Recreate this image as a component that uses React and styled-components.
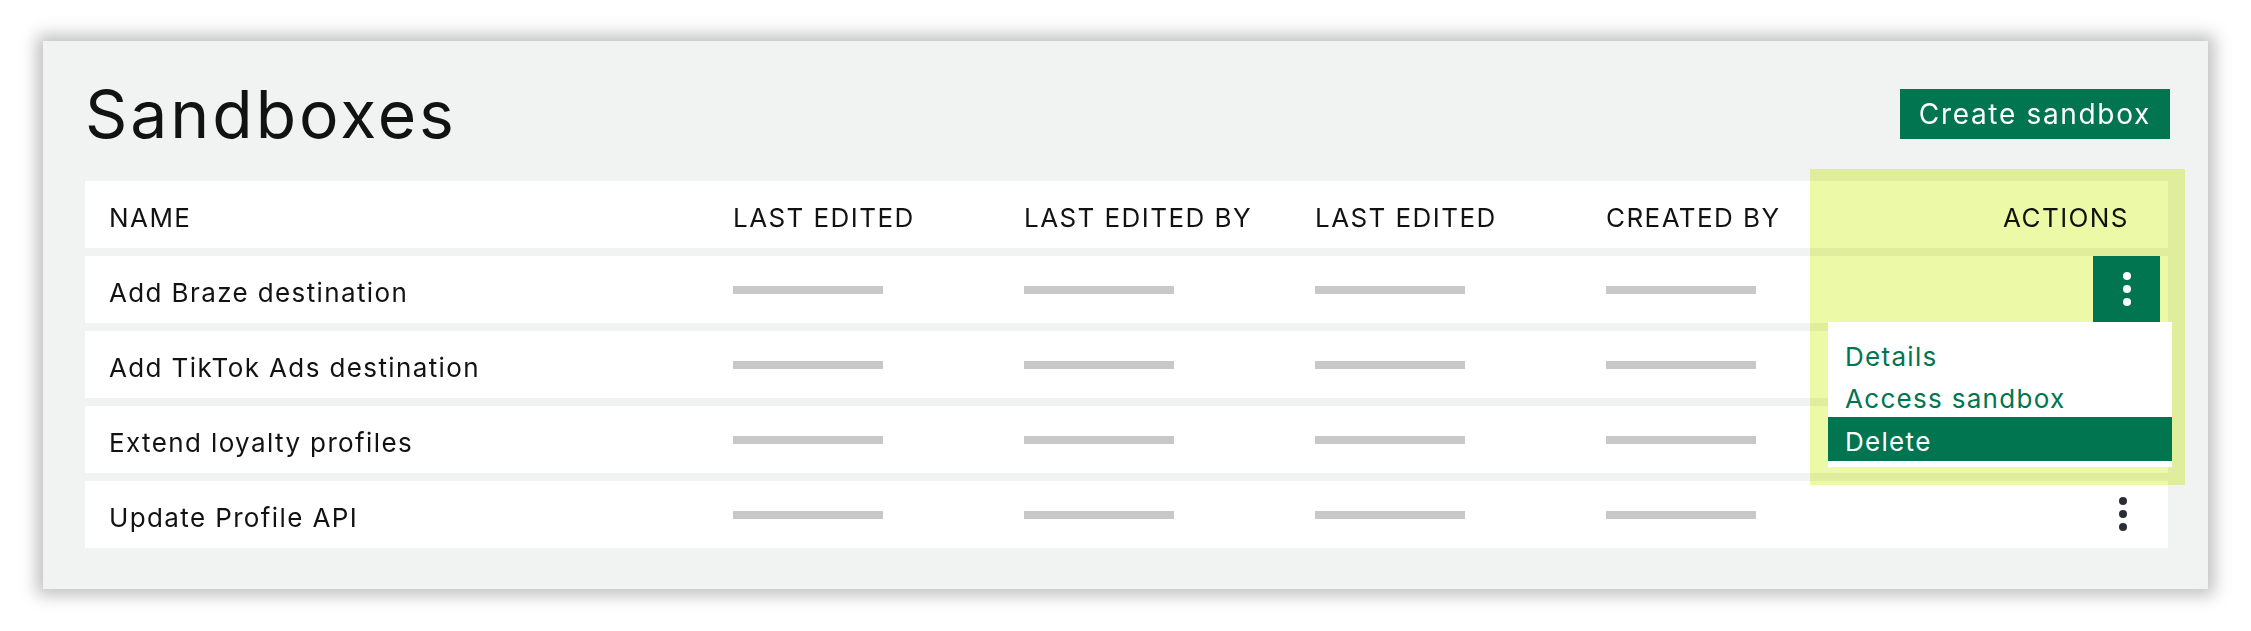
import React from 'react';
import styled, { createGlobalStyle } from 'styled-components';

const GlobalStyle = createGlobalStyle`
  body {
    margin: 0;
    background: #ffffff;
    font-family: Inter, "Noto Sans", sans-serif;
    color: #121212;
  }
`;

const Page = styled.div`
  padding: 41px 43px 42px 43px;
`;

const Panel = styled.section`
  background: #f1f3f2;
  box-shadow: 0 0 16px 6px rgba(0, 0, 0, 0.26);
  padding: 0 40px 41px 42px;
`;

const Header = styled.header`
  box-sizing: border-box;
  height: 140px;
  padding-top: 6px;
  display: flex;
  align-items: center;
  justify-content: space-between;
`;

const Title = styled.h1`
  margin: 0;
  font-size: 66px;
  font-weight: 400;
  line-height: 1;
  letter-spacing: 0.045em;
`;

const PrimaryButton = styled.button`
  height: 50px;
  margin-right: -2px;
  padding: 0 19px;
  border: none;
  background: #007550;
  color: #ffffff;
  font-family: inherit;
  font-size: 28px;
  letter-spacing: 0.06em;
`;

const Table = styled.div`
  position: relative;
  display: flex;
  flex-direction: column;
  gap: 8px;
`;

const Row = styled.div`
  display: grid;
  grid-template-columns: 624px repeat(4, 291px) 1fr;
  align-items: center;
  box-sizing: border-box;
  height: 67px;
  padding: 0 8px 0 24px;
  background: #ffffff;
  font-size: 26px;
  letter-spacing: ${(p) => (p.$head ? '0.055em' : '0.053em')};
`;

const Cell = styled.div`
  padding-top: 5px;
  justify-self: ${(p) => (p.$end ? 'end' : 'start')};
  padding-right: ${(p) => (p.$end ? '31px' : '0')};
`;

const Bar = styled.div`
  width: 150px;
  height: 8px;
  background: #c8c8c8;
`;

const Highlight = styled.div`
  position: absolute;
  left: 1725px;
  top: -12px;
  width: 375px;
  height: 316px;
  background: #ecf9a6;
  mix-blend-mode: multiply;
  z-index: 1;
  pointer-events: none;
`;

const KebabWrap = styled.div`
  position: relative;
  z-index: 2;
  justify-self: end;
  align-self: start;
  height: 66px;
  margin-right: ${(p) => (p.$open ? '0' : '4px')};
`;

const KebabButton = styled.button`
  width: 67px;
  height: 66px;
  padding: 0;
  border: none;
  display: flex;
  align-items: center;
  justify-content: center;
  background: ${(p) => (p.$open ? '#007550' : 'transparent')};
  color: ${(p) => (p.$open ? '#ffffff' : '#2a2d33')};
`;

const Menu = styled.ul`
  position: absolute;
  top: 100%;
  right: -12px;
  width: 344px;
  margin: 0;
  padding: 11px 0 6px;
  list-style: none;
  background: #ffffff;
  font-size: 26px;
  letter-spacing: 0.05em;
`;

const MenuItem = styled.li`
  box-sizing: border-box;
  height: ${(p) => (p.$active ? '44px' : '42px')};
  padding: 4px 17px 0;
  display: flex;
  align-items: center;
  background: ${(p) => (p.$active ? '#007550' : 'transparent')};
  color: ${(p) => (p.$active ? '#ffffff' : '#007550')};
`;

const Dots = () => (
  <svg width="8" height="34" viewBox="0 0 8 34" fill="currentColor">
    <circle cx="4" cy="4" r="4" />
    <circle cx="4" cy="17" r="4" />
    <circle cx="4" cy="30" r="4" />
  </svg>
);

const sandboxes = [
  'Add Braze destination',
  'Add TikTok Ads destination',
  'Extend loyalty profiles',
  'Update Profile API',
];

const columns = ['NAME', 'LAST EDITED', 'LAST EDITED BY', 'LAST EDITED', 'CREATED BY'];

const App = () => (
  <>
    <GlobalStyle />
    <Page>
      <Panel>
        <Header>
          <Title>Sandboxes</Title>
          <PrimaryButton>Create sandbox</PrimaryButton>
        </Header>
        <Table>
          <Highlight />
          <Row $head>
            {columns.map((c, i) => (
              <Cell key={i}>{c}</Cell>
            ))}
            <Cell $end>ACTIONS</Cell>
          </Row>
          {sandboxes.map((name, i) => (
            <Row key={name}>
              <Cell>{name}</Cell>
              <Bar />
              <Bar />
              <Bar />
              <Bar />
              {i === 0 && (
                <KebabWrap $open>
                  <KebabButton $open>
                    <Dots />
                  </KebabButton>
                  <Menu>
                    <MenuItem>Details</MenuItem>
                    <MenuItem>Access sandbox</MenuItem>
                    <MenuItem $active>Delete</MenuItem>
                  </Menu>
                </KebabWrap>
              )}
              {i === 3 && (
                <KebabWrap>
                  <KebabButton>
                    <Dots />
                  </KebabButton>
                </KebabWrap>
              )}
            </Row>
          ))}
        </Table>
      </Panel>
    </Page>
  </>
);

export default App;
